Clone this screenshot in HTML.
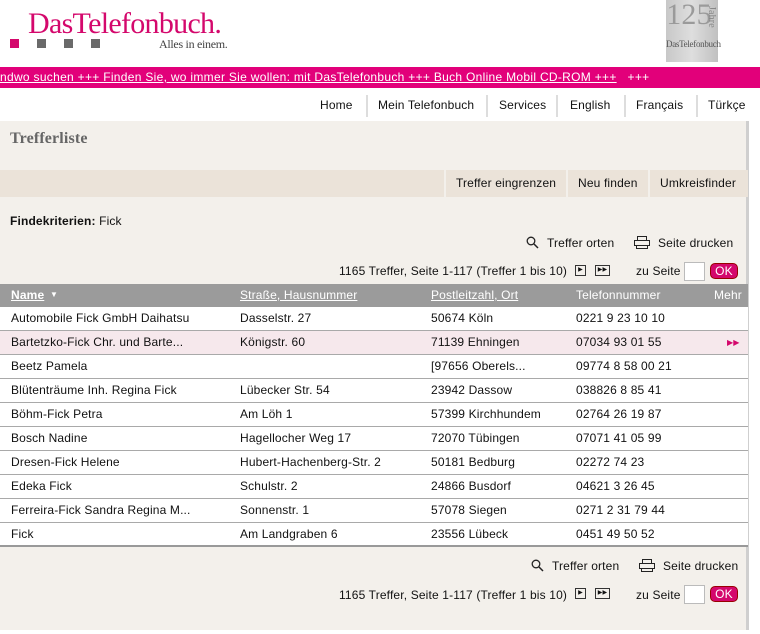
<!DOCTYPE html>
<html><head><meta charset="utf-8"><style>
*{margin:0;padding:0;box-sizing:border-box}
body{width:760px;height:634px;background:#fff;font-family:"Liberation Sans",Arial,sans-serif;font-size:12px;color:#111;position:relative;overflow:hidden;letter-spacing:0.15px}
.a{position:absolute;white-space:nowrap}
.logo{left:28px;top:7px;font-family:"Liberation Serif",serif;font-size:30px;color:#d4086c;letter-spacing:-0.7px}
.sq{position:absolute;top:39px;width:9px;height:9px;background:#6a6a6a}
.tick{left:0;top:67px;width:760px;height:21px;background:#e2007a;color:#fff;font-size:12px;line-height:21px;letter-spacing:0.3px}
.tab{top:95px;height:22px;line-height:20px;font-size:12px;border-right:2px solid #ddd}
.panel{left:0;top:121px;width:749px;height:509px;background:#f3f0eb;border-right:3px solid #cfcfcf}
.btn{top:170px;height:27px;line-height:27px;background:#ebe3d9;padding:0 10px;font-size:12px}
.row{left:0;width:748px;height:24px;background:#fff;border-bottom:1px solid #a9a9a9}
.row span{position:absolute;top:4px}
.ok{background:#d4086c;color:#fff;border:1px solid #900;border-radius:5px;width:28px;height:16px;line-height:14px;text-align:center;font-size:12px}
.box{width:21px;height:19px;background:#fff;border:1px solid #bbb}
.ic{border:1px solid #333;width:11px;height:11px;font-size:6px;line-height:9px;text-align:center}
</style></head><body>
<div class="a logo">DasTelefonbuch.</div>
<div class="sq" style="left:10px;background:#d4086c"></div>
<div class="sq" style="left:37px"></div>
<div class="sq" style="left:64px"></div>
<div class="sq" style="left:91px"></div>
<div class="a" style="left:159px;top:37px;font-family:'Liberation Serif',serif;font-size:12px;color:#444;letter-spacing:-0.3px">Alles in einem.</div>
<div class="a" style="left:666px;top:0;width:52px;height:62px;background:linear-gradient(90deg,#c8c8c8,#dedede,#c0c0c0);text-align:center">
<div style="font-family:'Liberation Serif',serif;font-size:30px;color:#9a9a9a;line-height:30px;margin-left:-6px">125</div>
<div class="a" style="right:1px;top:6px;font-family:'Liberation Serif',serif;font-size:10px;color:#888;writing-mode:vertical-rl">Jahre</div>
<div style="font-family:'Liberation Serif',serif;font-size:9px;color:#555;margin-top:9px;letter-spacing:-0.3px">DasTelefonbuch</div></div>
<div class="a tick"><u>ndwo suchen +++ Finden Sie, wo immer Sie wollen: mit DasTelefonbuch +++ Buch Online Mobil CD-ROM +++</u>&nbsp;&nbsp;&nbsp;+++</div>
<div class="a tab" style="left:312px;width:56px;padding-left:8px">Home</div>
<div class="a tab" style="left:370px;width:118px;padding-left:8px">Mein Telefonbuch</div>
<div class="a tab" style="left:490px;width:68px;padding-left:9px">Services</div>
<div class="a tab" style="left:560px;width:66px;padding-left:10px">English</div>
<div class="a tab" style="left:628px;width:70px;padding-left:8px">Français</div>
<div class="a" style="left:708px;top:95px;line-height:20px">Türkçe</div>
<div class="a panel"></div>
<div class="a" style="left:10px;top:130px;font-family:'Liberation Serif',serif;font-size:16px;font-weight:bold;color:#666">Trefferliste</div>
<div class="a" style="left:0;top:170px;width:444px;height:27px;background:#ebe3d9"></div>
<div class="a btn" style="left:446px;width:120px">Treffer eingrenzen</div>
<div class="a btn" style="left:568px;width:80px">Neu finden</div>
<div class="a btn" style="left:650px;width:98px">Umkreisfinder</div>
<div class="a" style="left:10px;top:214px"><b>Findekriterien:</b> Fick</div>
<svg class="a" style="left:526px;top:236px" width="14" height="13"><circle cx="5" cy="5" r="3.8" fill="none" stroke="#222" stroke-width="1.3"/><line x1="8" y1="8" x2="12" y2="12" stroke="#222" stroke-width="1.5"/></svg>
<div class="a" style="left:547px;top:236px">Treffer orten</div>
<svg class="a" style="left:634px;top:236px" width="16" height="13"><rect x="3.5" y="0.5" width="9" height="4" fill="none" stroke="#222"/><rect x="0.5" y="4.5" width="15" height="5" fill="none" stroke="#222"/><rect x="2.5" y="9.5" width="11" height="3" fill="none" stroke="#222"/></svg>
<div class="a" style="left:658px;top:236px">Seite drucken</div>
<div class="a" style="left:339px;top:264px">1165 Treffer, Seite 1-117 (Treffer 1 bis 10)</div>
<div class="a ic" style="left:575px;top:265px">▶</div>
<div class="a ic" style="left:595px;top:265px;width:15px">▶▶</div>
<div class="a" style="left:636px;top:264px">zu Seite</div>
<div class="a box" style="left:684px;top:262px"></div>
<div class="a ok" style="left:710px;top:263px">OK</div>
<div class="a" style="left:0;top:284px;width:748px;height:23px;background:#9b9b9b;color:#fff">
<span class="a" style="left:11px;top:4px;font-weight:bold;text-decoration:underline">Name</span><span class="a" style="left:50px;top:6px;font-size:8px">▼</span>
<span class="a" style="left:240px;top:4px;text-decoration:underline">Straße, Hausnummer</span>
<span class="a" style="left:431px;top:4px;text-decoration:underline">Postleitzahl, Ort</span>
<span class="a" style="left:576px;top:4px">Telefonnummer</span>
<span class="a" style="left:714px;top:4px">Mehr</span></div>
<div class="a row" style="top:307px"><span style="left:11px">Automobile Fick GmbH Daihatsu</span><span style="left:240px">Dasselstr. 27</span><span style="left:431px">50674 Köln</span><span style="left:576px">0221 9 23 10 10</span></div>
<div class="a row" style="top:331px;background:#f6e8ec"><span style="left:11px">Bartetzko-Fick Chr. und Barte...</span><span style="left:240px">Königstr. 60</span><span style="left:431px">71139 Ehningen</span><span style="left:576px">07034 93 01 55</span><span style="left:727px;color:#d4086c;font-size:8px;top:7px">▶▶</span></div>
<div class="a row" style="top:355px"><span style="left:11px">Beetz Pamela</span><span style="left:431px">[97656 Oberels...</span><span style="left:576px">09774 8 58 00 21</span></div>
<div class="a row" style="top:379px"><span style="left:11px">Blütenträume Inh. Regina Fick</span><span style="left:240px">Lübecker Str. 54</span><span style="left:431px">23942 Dassow</span><span style="left:576px">038826 8 85 41</span></div>
<div class="a row" style="top:403px"><span style="left:11px">Böhm-Fick Petra</span><span style="left:240px">Am Löh 1</span><span style="left:431px">57399 Kirchhundem</span><span style="left:576px">02764 26 19 87</span></div>
<div class="a row" style="top:427px"><span style="left:11px">Bosch Nadine</span><span style="left:240px">Hagellocher Weg 17</span><span style="left:431px">72070 Tübingen</span><span style="left:576px">07071 41 05 99</span></div>
<div class="a row" style="top:451px"><span style="left:11px">Dresen-Fick Helene</span><span style="left:240px">Hubert-Hachenberg-Str. 2</span><span style="left:431px">50181 Bedburg</span><span style="left:576px">02272 74 23</span></div>
<div class="a row" style="top:475px"><span style="left:11px">Edeka Fick</span><span style="left:240px">Schulstr. 2</span><span style="left:431px">24866 Busdorf</span><span style="left:576px">04621 3 26 45</span></div>
<div class="a row" style="top:499px"><span style="left:11px">Ferreira-Fick Sandra Regina M...</span><span style="left:240px">Sonnenstr. 1</span><span style="left:431px">57078 Siegen</span><span style="left:576px">0271 2 31 79 44</span></div>
<div class="a row" style="top:523px;height:24px;border-bottom:2px solid #999"><span style="left:11px">Fick</span><span style="left:240px">Am Landgraben 6</span><span style="left:431px">23556 Lübeck</span><span style="left:576px">0451 49 50 52</span></div>
<svg class="a" style="left:531px;top:559px" width="14" height="13"><circle cx="5" cy="5" r="3.8" fill="none" stroke="#222" stroke-width="1.3"/><line x1="8" y1="8" x2="12" y2="12" stroke="#222" stroke-width="1.5"/></svg>
<div class="a" style="left:552px;top:559px">Treffer orten</div>
<svg class="a" style="left:639px;top:559px" width="16" height="13"><rect x="3.5" y="0.5" width="9" height="4" fill="none" stroke="#222"/><rect x="0.5" y="4.5" width="15" height="5" fill="none" stroke="#222"/><rect x="2.5" y="9.5" width="11" height="3" fill="none" stroke="#222"/></svg>
<div class="a" style="left:663px;top:559px">Seite drucken</div>
<div class="a" style="left:339px;top:588px">1165 Treffer, Seite 1-117 (Treffer 1 bis 10)</div>
<div class="a ic" style="left:575px;top:588px">▶</div>
<div class="a ic" style="left:595px;top:588px;width:15px">▶▶</div>
<div class="a" style="left:636px;top:588px">zu Seite</div>
<div class="a box" style="left:684px;top:585px"></div>
<div class="a ok" style="left:710px;top:586px">OK</div>
</body></html>
